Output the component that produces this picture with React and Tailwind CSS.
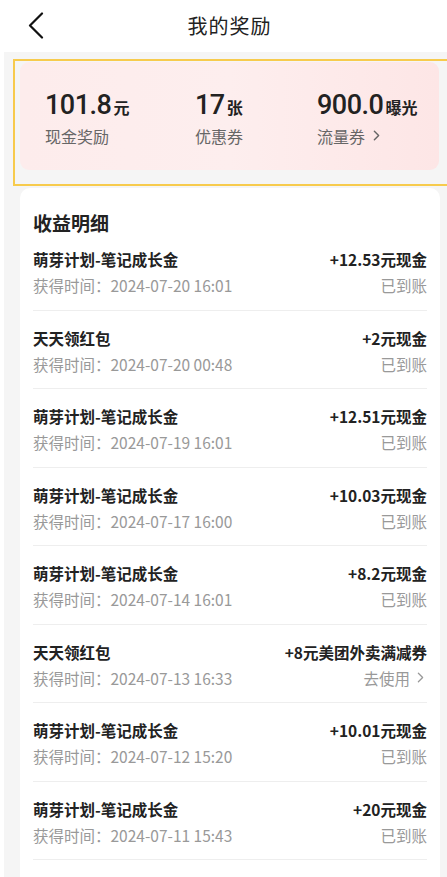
import React from "react";
import { ChevronRight } from "lucide-react";

const records = [
  { title: "萌芽计划-笔记成长金", time: "2024-07-20 16:01", amount: "+12.53元现金", status: "已到账" },
  { title: "天天领红包", time: "2024-07-20 00:48", amount: "+2元现金", status: "已到账" },
  { title: "萌芽计划-笔记成长金", time: "2024-07-19 16:01", amount: "+12.51元现金", status: "已到账" },
  { title: "萌芽计划-笔记成长金", time: "2024-07-17 16:00", amount: "+10.03元现金", status: "已到账" },
  { title: "萌芽计划-笔记成长金", time: "2024-07-14 16:01", amount: "+8.2元现金", status: "已到账" },
  { title: "天天领红包", time: "2024-07-13 16:33", amount: "+8元美团外卖满减券", status: "去使用", link: true },
  { title: "萌芽计划-笔记成长金", time: "2024-07-12 15:20", amount: "+10.01元现金", status: "已到账" },
  { title: "萌芽计划-笔记成长金", time: "2024-07-11 15:43", amount: "+20元现金", status: "已到账" },
];

const stats = [
  { value: "101.8", unit: "元", label: "现金奖励", w: "w-[150px]" },
  { value: "17", unit: "张", label: "优惠券", w: "w-[122px]" },
  { value: "900.0", unit: "曝光", label: "流量券", arrow: true, w: "" },
];

const App = () => {
  return (
    <div
      className="w-[447px] h-[877px] overflow-hidden bg-white flex flex-col"
      style={{ fontFamily: '"Noto Sans CJK SC", "Noto Sans", sans-serif' }}
    >
      {/* HEADER */}
      <header className="h-[52px] shrink-0 flex items-center justify-center relative bg-white">
        <svg className="absolute left-[27px] top-[12px]" width="18" height="27" viewBox="0 0 18 27" fill="none">
          <path d="M15 1.5 L3 13.5 L15 25.5" stroke="#111" strokeWidth="2.2" strokeLinecap="round" strokeLinejoin="round" />
        </svg>
        <h1 className="ml-[12px] text-[20px] text-[#222] tracking-[1px]">我的奖励</h1>
      </header>

      <div className="ml-[4px] bg-[#f5f5f5] flex-1 flex flex-col pt-[7px]">
        {/* STATS */}
        <section className="ml-[9px] -mr-[4px] border-2 border-r-0 border-[#f7cb4d] pt-[1px] pl-[5px] pr-[12px] pb-[14px]">
          <div className="h-[108px] rounded-[9px] bg-gradient-to-r from-[#fdecec] via-[#fdeeee] to-[#fde6e6] flex items-center pl-[25px] pt-[3px]">
            {stats.map((s) => (
              <div key={s.label} className={`${s.w} flex flex-col`}>
                <div className="flex items-baseline text-[#222]">
                  <span className="text-[27px] font-medium leading-[32px] tracking-[-0.5px]" style={{ fontFamily: "Roboto, sans-serif" }}>
                    {s.value}
                  </span>
                  <span className="text-[16px] font-bold ml-[2px]">{s.unit}</span>
                </div>
                <div className="flex items-center text-[16px] text-[#666] mt-[4px] leading-[22px]">
                  {s.label}
                  {s.arrow && <ChevronRight size={17} strokeWidth={2} className="ml-[3px]" />}
                </div>
              </div>
            ))}
          </div>
        </section>

        {/* RECORDS */}
        <section className="ml-[16px] mr-[7px] mt-[2px] flex-1 bg-white rounded-t-[10px] pt-[24px] px-[13px]">
          <h2 className="text-[19px] font-bold text-[#222] leading-[22px] -mb-[2px]">收益明细</h2>
          <div>
            {records.map((r, i) => (
              <div key={i} className="pt-[15px] pb-[12.5px] border-b border-[#eeeeee] flex justify-between">
                <div className="flex flex-col">
                  <span className="text-[15.5px] font-semibold text-[#222] leading-[24px]">{r.title}</span>
                  <span className="text-[15.5px] text-[#999] leading-[24px] mt-[2px]">获得时间：{r.time}</span>
                </div>
                <div className="flex flex-col items-end">
                  <span className="text-[15.5px] font-semibold text-[#222] leading-[24px]">{r.amount}</span>
                  <span className="text-[15.5px] text-[#999] leading-[24px] mt-[2px] flex items-center">
                    {r.status}
                    {r.link && <ChevronRight size={17} strokeWidth={1.8} className="ml-[2px] -mr-[2px]" />}
                  </span>
                </div>
              </div>
            ))}
          </div>
        </section>
      </div>
    </div>
  );
};

export default App;
